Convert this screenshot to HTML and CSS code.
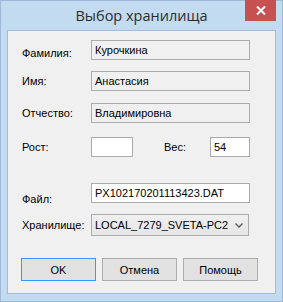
FILE: index.html
```html
<!DOCTYPE html>
<html lang="ru">

<head>
    <meta charset="UTF-8" />
    <title>Выбор хранилища</title>
    <link rel="stylesheet" href="styles.css">
</head>

<body>
    <div class="window">
        <div class="titlebar">
            <span class="title">Выбор хранилища</span>
            <div class="close">
                <svg width="10" height="9" viewBox="0 0 10 9">
                    <path d="M1 0.5 L9 8.5 M9 0.5 L1 8.5" stroke="#fff" stroke-width="2" />
                </svg>
            </div>
        </div>

        <div class="client">
            <div class="row r-first">
                <label class="lbl lbl-low">Фамилия:</label>
                <div class="field readonly">Курочкина</div>
            </div>
            <div class="row r-name">
                <label class="lbl">Имя:</label>
                <div class="field readonly">Анастасия</div>
            </div>
            <div class="row r-middle">
                <label class="lbl">Отчество:</label>
                <div class="field readonly">Владимировна</div>
            </div>
            <div class="row r-size">
                <label class="lbl">Рост:</label>
                <div class="field small"></div>
                <label class="lbl lbl-weight">Вес:</label>
                <div class="field small weight">54</div>
            </div>
            <div class="row r-file">
                <label class="lbl lbl-file">Файл:</label>
                <div class="field">PX102170201113423.DAT</div>
            </div>
            <div class="row r-store">
                <label class="lbl">Хранилище:</label>
                <div class="combo">
                    <span>LOCAL_7279_SVETA-PC2</span>
                    <svg width="8" height="5" viewBox="0 0 8 5">
                        <path d="M0.5 0.5 L4 4 L7.5 0.5" fill="none" stroke="#5a5a5a" stroke-width="1.4" />
                    </svg>
                </div>
            </div>
            <div class="buttons">
                <button class="btn default">OK</button>
                <button class="btn">Отмена</button>
                <button class="btn">Помощь</button>
            </div>
        </div>
    </div>
</body>

</html>
```

FILE: styles.css
```css
body {
    margin: 0;
    font-family: "Liberation Sans", Arial, sans-serif;
    font-size: 11px;
    color: #000;
}

.window {
    width: 283px;
    height: 302px;
    box-sizing: border-box;
    background-color: #c3dbf1;
    border: 1px solid #9db9d5;
    display: flex;
    flex-direction: column;
}

.titlebar {
    height: 29px;
    position: relative;
    display: flex;
    justify-content: center;
    align-items: center;
}

.title {
    font-family: "Open Sans", "Noto Sans", sans-serif;
    font-size: 14.5px;
    color: #2b2b2b;
    margin-top: -1px;
}

.close {
    position: absolute;
    top: -1px;
    right: 6px;
    width: 31px;
    height: 21px;
    background-color: #c75050;
    display: flex;
    justify-content: center;
    align-items: center;
}

.client {
    margin: 0 6px 0 6px;
    height: 264px;
    box-sizing: border-box;
    background-color: #f0f0f0;
    border: 1px solid #a3bdd8;
    padding: 9px 0 0 14px;
}

.row {
    display: flex;
    align-items: center;
    height: 20px;
}

.r-name {
    margin-top: 11px;
}

.r-middle {
    margin-top: 12px;
}

.r-size {
    margin-top: 14px;
}

.r-file {
    margin-top: 26px;
}

.r-store {
    margin-top: 11px;
    height: 22px;
}

.lbl {
    width: 69px;
    flex-shrink: 0;
}

.lbl-low {
    padding-top: 6px;
}

.lbl-file {
    padding-top: 11px;
}

.lbl-weight {
    width: 46px;
    margin-left: 31px;
}

.field {
    width: 159px;
    height: 20px;
    box-sizing: border-box;
    border: 1px solid #ababab;
    background-color: #fff;
    padding: 0 0 0 3px;
    line-height: 18px;
    white-space: nowrap;
}

.field.readonly {
    background-color: #f0f0f0;
}

.field.small {
    width: 42px;
}

.field.weight {
    width: 40px;
}

.combo {
    width: 158px;
    height: 22px;
    box-sizing: border-box;
    border: 1px solid #acacac;
    background: linear-gradient(#f0f0f0, #e5e5e5);
    display: flex;
    align-items: center;
    justify-content: space-between;
    padding: 0 5px 0 3px;
    white-space: nowrap;
}

.buttons {
    display: flex;
    gap: 6px;
    margin: 22px 0 0 -1px;
}

.btn {
    width: 75px;
    height: 23px;
    box-sizing: border-box;
    background-color: #e1e1e1;
    border: 1px solid #adadad;
    font-family: "Liberation Sans", Arial, sans-serif;
    font-size: 11px;
    padding: 0;
    color: #000;
}

.btn.default {
    border-color: #3399ff;
}
```
